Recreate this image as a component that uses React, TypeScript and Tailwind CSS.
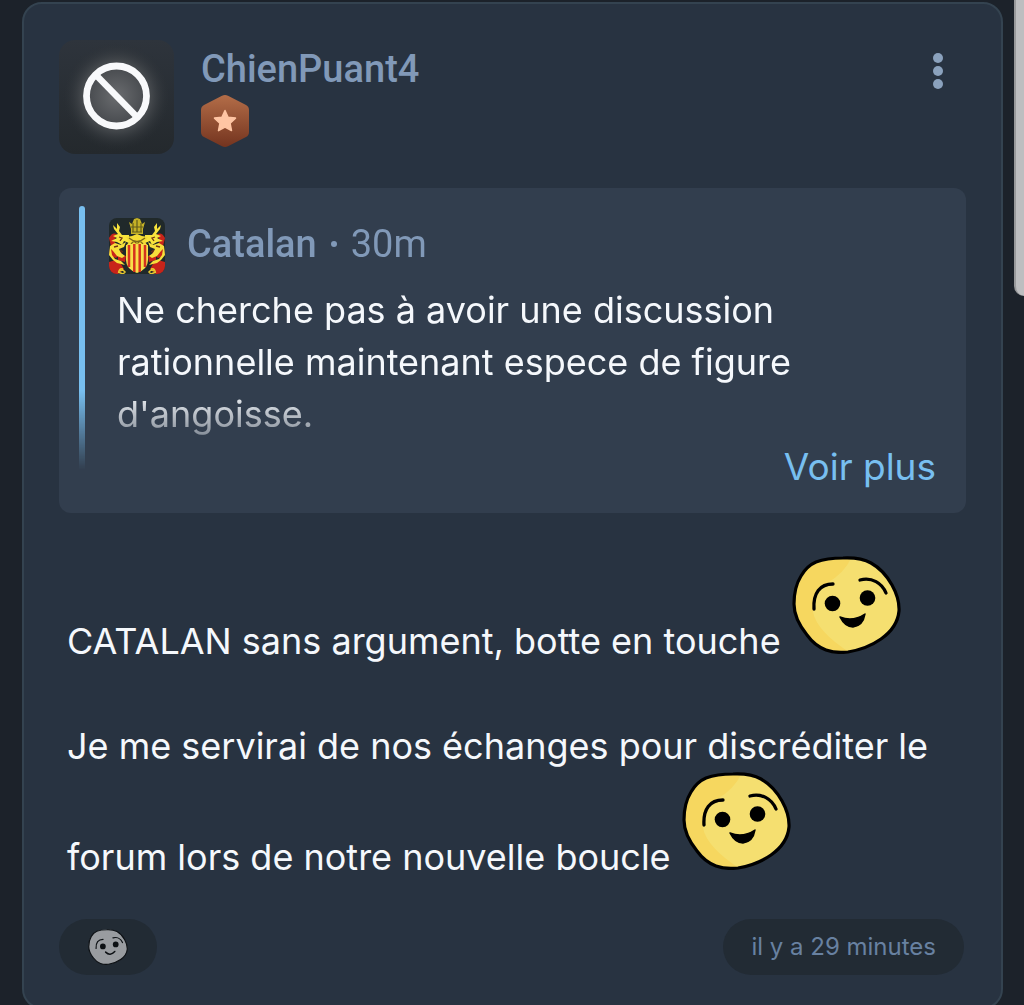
import { useId } from 'react';

function ForbiddenAvatar() {
  return (
    <svg viewBox="0 0 115 114" className="h-[114px] w-[115px] shrink-0 rounded-2xl" role="img" aria-label="Avatar de ChienPuant4">
      <defs>
        <linearGradient id="avatar-base" x1="0" y1="0" x2="0" y2="1">
          <stop offset="0" stopColor="#2e343c" />
          <stop offset="1" stopColor="#24292d" />
        </linearGradient>
        <radialGradient id="avatar-glow">
          <stop offset="0" stopColor="#6a6c6f" />
          <stop offset="0.5" stopColor="#4a4d51" />
          <stop offset="0.65" stopColor="#474b4f" stopOpacity="0.85" />
          <stop offset="1" stopColor="#2a2f34" stopOpacity="0" />
        </radialGradient>
      </defs>
      <rect width="115" height="114" fill="url(#avatar-base)" />
      <circle cx="57.500" cy="56" r="54" fill="url(#avatar-glow)" />
      <g stroke="#f8f9fb" fill="none">
        <circle cx="57.500" cy="56" r="30" strokeWidth="6.800" />
        <path d="M37 35 78 77" strokeWidth="6.500" />
      </g>
    </svg>
  );
}

function Badge() {
  return (
    <svg viewBox="0 0 48 52" className="h-[52px] w-12" role="img" aria-label="Badge bronze">
      <defs>
        <linearGradient id="badge-fill" x1="0" y1="0" x2="0" y2="1">
          <stop offset="0" stopColor="#b36d48" />
          <stop offset="1" stopColor="#74341f" />
        </linearGradient>
      </defs>
      <path d="M21 .8q3-1.600 6 0l18 9.200q3 1.500 3 5v22q0 3.500-3 5L27 51.200q-3 1.600-6 0L3 42q-3-1.500-3-5V15q0-3.500 3-5z" fill="url(#badge-fill)" />
      <path d="m24 15.500 3.100 6.700 7.400.9-5.400 5.200 1.400 7.300-6.500-3.500-6.500 3.500 1.400-7.300-5.400-5.200 7.400-.9z" fill="#ffc5a3" stroke="#ffc5a3" strokeWidth="1.500" strokeLinejoin="round" />
    </svg>
  );
}

function Supporter() {
  return (
    <g>
      <path d="M0 20Q4 13 8 17L5 22 7 27 2 28ZM1 38Q-1 28 6 26L8 31 13 35 7 40ZM0 44 7 42 12 46 15 51 9 56 3 56 0 52ZM9 36 17 38 16 44 9 42Z" fill="#c8241a" />
      <path d="M4 7 8 11 8 5 11 9 10 13 13 17 20 17 20 25 15 23 13 27 8 24 2 23 8 20 4 18 9 16 5 11Z" fill="#f9e43c" />
      <path d="M17 24 15 29 10 31 12 35 16 38 13 40 8 38 4 33 2 31 3 37 6 41 12 43 16 47 12 46 8 45 4 42 0 37 1 28 6 25 12 27Z" fill="#f7df3b" />
      <path d="M14 51q-3-1-4 2l4-1 2 2-2 2-5-2" stroke="#e8c92f" strokeWidth="1.500" fill="none" />
      <path d="m10 19 3 1-2 3M5 29l4-1M11 32l3 2" stroke="#6f3115" strokeWidth="1.300" fill="none" />
    </g>
  );
}

function Crest() {
  return (
    <svg viewBox="0 0 56 56" className="size-14 shrink-0 rounded-lg" role="img" aria-label="Avatar de Catalan">
      <rect width="56" height="56" fill="#20292a" />
      <Supporter />
      <g transform="translate(56 0) scale(-1 1)">
        <Supporter />
      </g>
      <path d="m20 4 3 2 2-5 3-1 3 1 2 5 3-2-2 7v5H22v-5z" fill="#c4b126" />
      <path d="M24 5v9m4-12v12m4-9v9M22 9h12M23 14h10" stroke="#625c1c" strokeWidth="1.200" />
      <path d="m17 19 6-1 5-2 5 2 6 1-3 5 3 4H17l3-4z" fill="#f4dc35" />
      <path d="M20 20q8 7 16 0M22 26l3-3 3 3 3-3 3 3" stroke="#806919" strokeWidth="1.300" fill="none" />
      <path d="M17 27q11-3 22 0v15q0 9-11 13-11-4-11-13z" fill="#f8df49" />
      <path d="M20 27v22M25.300 26v28M30.700 26v28M36 27v22" stroke="#d5321e" strokeWidth="2.500" />
    </svg>
  );
}

function Smiley({ muted = false }: { muted?: boolean }) {
  const clip = useId();
  const face = 'M51 2C62 1.500 71 2.500 79 7C88 12 95 20 100 29C105 38 107.500 46 107 55C106 66 99 76 89 83C79 90 68 94 56 96C48 97 41 96.500 34 94C26 91 20 86 15 79C7 69 2 60 2 48C2 37 4 28 9 20C13 13 17 9 24 6C32 3 41 2 51 2Z';
  return (
    <svg
      viewBox="0 0 109 98"
      className={muted ? 'h-9 w-10 opacity-60 grayscale' : 'ml-[11px] inline-block h-[98px] w-[109px] align-baseline'}
      role="img"
      aria-label="Clin d'œil"
    >
      <clipPath id={clip}>
        <path d={face} />
      </clipPath>
      <path d={face} fill={muted ? '#e8e8e8' : '#f5df70'} />
      {!muted && (
        <path d="M60 0Q54 16 34 28Q21 38 21 56Q25 76 60 98H0V0Z" fill="#f6d75f" clipPath={`url(#${clip})`} />
      )}
      <path d={face} fill="none" stroke="#000" strokeWidth="3.200" />
      <circle cx="40.500" cy="47.500" r="7.800" />
      <circle cx="75.500" cy="42" r="7.800" />
      <path d="M22 53C21 37 28 28 41 28M68 24C80 21 90 27 94 37" fill="none" stroke="#000" strokeWidth="3.300" strokeLinecap="round" />
      {muted ? (
        <path d="M48 63Q60 75 73 61" fill="none" stroke="#000" strokeWidth="4" strokeLinecap="round" />
      ) : (
        <path d="M48 61Q61 66 73 58Q71 70 61 71Q53 71 48 61Z" stroke="#000" strokeWidth="1.500" strokeLinejoin="round" />
      )}
    </svg>
  );
}

export default function App() {
  return (
    <div className="relative h-screen overflow-hidden bg-[#1c222a] pt-0.5 pr-[21px] pl-[22px] font-['Inter',sans-serif]">
      <article className="rounded-[20px] border-2 border-[#344350] bg-[#283341] px-[35px] pt-9 pb-8">
        <header className="flex items-start">
          <ForbiddenAvatar />
          <div className="ml-[27px] pt-[7px]">
            <a href="#profil" className="block font-['Roboto',sans-serif] text-[38px] leading-[44px] font-medium text-[#8199b8]">
              ChienPuant4
            </a>
            <div className="mt-1">
              <Badge />
            </div>
          </div>
          <button type="button" aria-label="Options du message" className="mt-[13px] mr-[23px] ml-auto flex flex-col items-center gap-[3px] p-0">
            <span className="size-[10px] rounded-full bg-[#8ba2bd]" />
            <span className="size-[10px] rounded-full bg-[#8ba2bd]" />
            <span className="size-[10px] rounded-full bg-[#8ba2bd]" />
          </button>
        </header>

        <blockquote className="relative mt-[34px] rounded-xl bg-[#323e4e] px-5 pt-[18px] pb-[43px]">
          <div className="flex h-[264px] gap-6 [mask-image:linear-gradient(to_bottom,#000_70%,transparent)]">
            <div className="w-1.5 shrink-0 rounded-t-full bg-[#78bff0]" />
            <div className="min-w-0 pt-3">
              <div className="flex items-center font-['Roboto',sans-serif] text-[38px] leading-[52px] text-[#8199b8]">
                <Crest />
                <div className="ml-[22px] flex items-center pb-1">
                  <a href="#catalan" className="font-medium">Catalan</a>
                  <span className="mx-3.5 size-1.5 rounded-full bg-[#8199b8]" />
                  <time>30m</time>
                </div>
              </div>
              <p className="mt-2.5 ml-2 text-[36px] leading-[52px] text-[#f5f8fc]">
                Ne cherche pas à avoir une discussion rationnelle maintenant espece de figure d'angoisse.
              </p>
            </div>
          </div>
          <button type="button" className="absolute right-[30px] bottom-5 text-[37px] leading-[52px] text-[#78bff0]">
            Voir plus
          </button>
        </blockquote>

        <div className="mt-[43px] px-2 text-[36px] leading-[52px] text-[#f5f8fc]">
          <p>
            CATALAN sans argument, botte en touche
            <Smiley />
          </p>
          <p className="mt-[53px]">
            Je me servirai de nos échanges pour discréditer le forum lors de notre nouvelle boucle
            <Smiley />
          </p>
        </div>

        <footer className="mt-9 flex items-center justify-between pr-0.5">
          <button type="button" aria-label="Réagir" className="flex h-14 w-[98px] items-center justify-center rounded-full bg-[#222b34]">
            <Smiley muted />
          </button>
          <time className="rounded-full bg-[#222b34] px-7 text-[24px] leading-[56px] text-[#6881a1]">il y a 29 minutes</time>
        </footer>
      </article>
      <div className="absolute top-0 right-0 h-[296px] w-2.5 rounded-bl-[10px] border-l-2 border-[#98999b] bg-[#bdbec0]" />
    </div>
  );
}
